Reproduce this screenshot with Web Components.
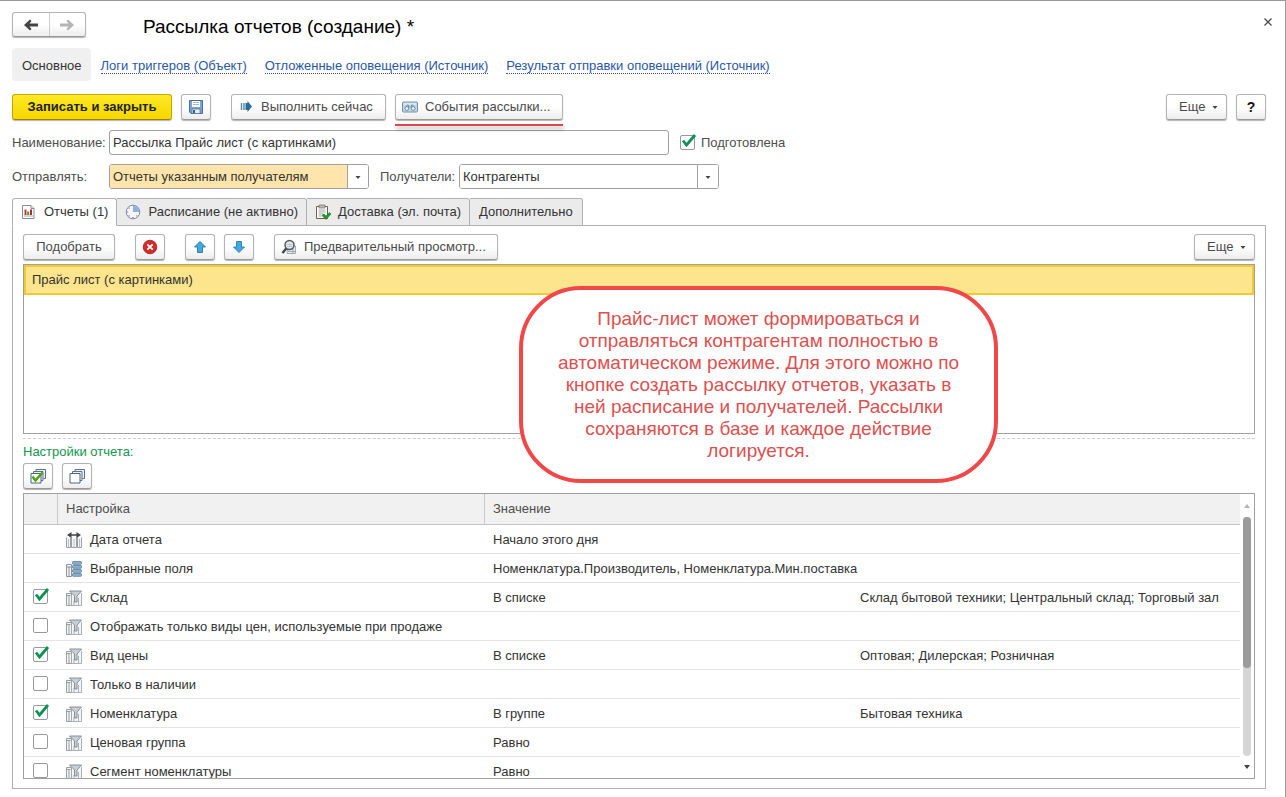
<!DOCTYPE html>
<html lang="ru">
<head>
<meta charset="utf-8">
<title>Рассылка отчетов (создание)</title>
<style>
    html, body {
        margin: 0;
        height: 100%;
    }

    body {
        font-family: "Liberation Sans", Arial, sans-serif;
        font-size: 13px;
        line-height: 16px;
        color: #333;
        background: #fff;
    }
</style>
</head>
<body>
<mailing-form></mailing-form>

<script>
const ICONS = {
    back: '<path d="M1 8l6-5.500 1.500 1.500-2 2.500H15v3H6.500l2 2.500L7 13.500z" fill="#444"/>',
    forward: '<path d="M15 8L9 2.500 7.500 4l2 2.500H1v3h8.500l-2 2.500L9 13.500z" fill="#b5b5b5"/>',
    save: '<path d="M1.500 1.500h13v13H3L1.500 13z" fill="#7ba4d0" stroke="#4a6b92"/><path d="M4 2h8v6H4z" fill="#fff"/><path d="M5 3.500h6M5 5.500h6" stroke="#a9bccd"/><path d="M4 10h8v4.500H4z" fill="#e6edf3" stroke="#4a6b92" stroke-width=".7"/><path d="M5 11h2v3H5z" fill="#3e5d7a"/>',
    run: '<path d="M3.500 4v7M6 4v7" stroke="#4d88ad" stroke-width="1.400"/><path d="M7.500 4h2V2l4.500 5.500L9.500 13v-2h-2z" fill="#2b6c99"/>',
    events: '<rect x=".5" y="3" width="15" height="10" rx="1" fill="#c3d9e8" stroke="#7291a8"/><path d="M2 5h12" stroke="#eef5f9"/><path d="M3.500 9l1.500-3h1.500v2h3V6H11l1.500 3" stroke="#6f8fa7" fill="none" stroke-width=".9"/><circle cx="4.800" cy="9.500" r="1.900" fill="#eef5f9" stroke="#5d7d96" stroke-width=".9"/><circle cx="11.200" cy="9.500" r="1.900" fill="#eef5f9" stroke="#5d7d96" stroke-width=".9"/>',
    report: '<path d="M1.500 1.500h8.500l3 3v10h-11.500z" fill="#fff" stroke="#8c8c8c"/><path d="M10 1.500v3h3" fill="#e4e4e4" stroke="#8c8c8c"/><path d="M3.500 5.500h2V11h-2z" fill="#c93434"/><path d="M6.200 7.500h2V11h-2z" fill="#3c9a44"/><path d="M9 5.500h2V11H9z" fill="#b3272d"/><path d="M3 12h9" stroke="#aaa"/>',
    clock: '<circle cx="8" cy="8" r="6.800" fill="#f4f7fc" stroke="#7089b5"/><path d="M8 8V1.800A6.200 6.200 0 0 1 14.200 8z" fill="#8fb0df"/><path d="M8 13v1M2 8h1.200M3.800 12.200l.7-.7M12.200 12.200l-.7-.7M3.800 3.800l.7.7" stroke="#d9534a" stroke-width="1.200"/>',
    delivery: '<path d="M1.500 2.500h11v12h-11z" fill="#fff" stroke="#7a5a48"/><path d="M4 1h6v3H4z" fill="#b9b9b9" stroke="#6e6e6e" stroke-width=".7"/><path d="M3.500 6h7M3.500 8h7M3.500 10h5M3.500 12h3" stroke="#a3a3a3"/><path d="M7 11.500L9 10l2 2 3.500-3.500L16 10l-5 5.500z" fill="#1f9a2e" stroke="#0f7a1e" stroke-width=".6"/>',
    remove: '<circle cx="8" cy="8" r="6.800" fill="#d42a2a" stroke="#a51d1d" stroke-width=".8"/><path d="M5.300 5.300l5.400 5.400M10.700 5.300l-5.400 5.400" stroke="#fff" stroke-width="1.800"/>',
    up: '<path d="M8 2.500l5.500 5.500H10.500v5.500h-5V8H2.500z" fill="#41a8e0" stroke="#2878ab" stroke-width=".9"/>',
    down: '<path d="M8 13.500L2.500 8h3V2.500h5V8h3z" fill="#41a8e0" stroke="#2878ab" stroke-width=".9"/>',
    preview: '<path d="M7 7h7.500v7.500H6z" fill="#e8edf1" stroke="#8798a6" stroke-width=".8"/><path d="M7 12.500h7M12 9v5" stroke="#8798a6" stroke-width=".8"/><circle cx="8.500" cy="6" r="4.500" fill="#dfe7ec" stroke="#555" stroke-width="1.500"/><path d="M6 5.500h5M6 7.500h5" stroke="#a9b6bf" stroke-width=".8"/><path d="M5.200 9.500L1.500 14" stroke="#444" stroke-width="2.400"/>',
    checkAll: '<path d="M6 3.500v-2h9.500v9h-2" fill="#eef3f7" stroke="#5a7186"/><path d="M3.500 5.500v-2h9.500v9h-2" fill="#eef3f7" stroke="#5a7186"/><path d="M1 5.500h10v9.500H1z" fill="#fff" stroke="#4c6579"/><path d="M2.500 8.500l3 4 7-8" fill="none" stroke="#4fa51c" stroke-width="2.600"/>',
    uncheckAll: '<path d="M6 3.500v-2h9.500v9h-2" fill="#eef3f7" stroke="#5a7186"/><path d="M3.500 5.500v-2h9.500v9h-2" fill="#eef3f7" stroke="#5a7186"/><path d="M1 5.500h10v9.500H1z" fill="#fff" stroke="#4c6579"/>',
    period: '<path d="M.5 5.500v10h4v-10M5.500 5.500v10h5v-10M11.500 5.500v10h4v-10" fill="#f5f5f5" stroke="#8e9499" stroke-width=".9"/><path d="M2.500 7v8M8 7v8M13.500 7v8" stroke="#b9bec2"/><path d="M3 3h10" stroke="#333" stroke-width="1.400"/><path d="M1 3l4.500-3v6zM15 3l-4.500-3v6z" fill="#444"/>',
    fields: '<path d="M.5 3.500h5v12h-5zM.5 6h5M3 6v9" fill="#f5f5f5" stroke="#8e9499"/><g fill="#8db2cc" stroke="#426d8c" stroke-width=".7"><rect x="6.500" y=".5" width="9" height="2.800" rx=".8"/><rect x="6.500" y="4.500" width="9" height="2.800" rx=".8"/><rect x="6.500" y="8.500" width="9" height="2.800" rx=".8"/><rect x="6.500" y="12.500" width="9" height="2.800" rx=".8"/></g>',
    filter: '<path d="M.5 3.500h5v12h-5zM.5 5.500h4M3 6v9" fill="#f3f4f5" stroke="#8e9499" stroke-width=".9"/><path d="M5.500 6v9.500h10V3M8 15v-4M12.500 15V8" fill="#f3f4f5" stroke="#a2a8ad" stroke-width=".9"/><path d="M3.500 1h12L11 6v6H8.500V6z" fill="#c8d0d6" stroke="#7b868f" stroke-width=".9"/>',
    close: '<path d="M4.500 4.500l7 7M11.500 4.500l-7 7" stroke="#444" stroke-width="1.200"/>',
    caret: '<path d="M5.500 7h5L8 10z" fill="#444"/>',
    scrollUp: '<path d="M5 10h6L8 6z" fill="#b5b5b5"/>',
    scrollDown: '<path d="M5 6h6l-3 4z" fill="#444"/>'
};

class UiIcon extends HTMLElement {
    connectedCallback() {
        this.attachShadow({ mode: 'open' });
        this.shadowRoot.innerHTML = `
            <style>
                :host { display: block; flex: none; width: 16px; height: 16px; }
                svg { display: block; }
            </style>
            <svg width="16" height="16" viewBox="0 0 16 16" aria-hidden="true">${ICONS[this.getAttribute('name')]}</svg>
        `;
    }
}

class UiButton extends HTMLElement {
    connectedCallback() {
        const icon = this.getAttribute('icon');
        const label = this.getAttribute('label');
        this.attachShadow({ mode: 'open' });
        this.shadowRoot.innerHTML = `
            <style>
                :host { display: block; position: relative; flex: none; }

                button {
                    display: flex;
                    align-items: center;
                    justify-content: center;
                    gap: 7px;
                    box-sizing: border-box;
                    width: 100%;
                    height: 26px;
                    margin: 0;
                    padding: 0 6px;
                    border: 1px solid #b3b3b3;
                    border-bottom-color: #999;
                    border-radius: 3px;
                    background: linear-gradient(#fff 50%, #ededed);
                    box-shadow: 0 1px 1px rgba(0, 0, 0, 0.3);
                    font: inherit;
                    color: #4a4a4a;
                    white-space: nowrap;
                    cursor: pointer;
                }

                :host([icon]) button { justify-content: flex-start; }
                :host([square]) { width: 30px; }
                :host([square]) button { justify-content: center; padding: 0; }

                :host([primary]) button {
                    border-color: #c6a800;
                    border-bottom-color: #9c8500;
                    background: linear-gradient(#ffe924, #f5d800);
                    color: #222;
                    font-weight: bold;
                }

                :host([menu]) button { justify-content: flex-start; gap: 2px; padding: 0 0 0 12px; }
                :host([strong]) button { color: #111; font-size: 14px; font-weight: bold; }

                /* red marker under the button */
                :host([marked])::after {
                    content: '';
                    position: absolute;
                    left: 0;
                    right: 0;
                    top: 30px;
                    height: 2px;
                    background: #e04848;
                    box-shadow: 1px 3px 4px rgba(0, 0, 0, 0.35);
                }
            </style>
            <button type="button" ${label ? `aria-label="${label}"` : ''}>
                ${icon ? `<ui-icon name="${icon}"></ui-icon>` : ''}
                <slot></slot>
                ${this.hasAttribute('menu') ? '<ui-icon name="caret"></ui-icon>' : ''}
            </button>
        `;
        if (icon && !this.textContent.trim()) {
            this.shadowRoot.querySelector('slot').remove();
        }
    }
}

class HistoryButtons extends HTMLElement {
    connectedCallback() {
        this.attachShadow({ mode: 'open' });
        this.shadowRoot.innerHTML = `
            <style>
                :host {
                    display: flex;
                    box-sizing: border-box;
                    width: 74px;
                    height: 25px;
                    border: 1px solid #b3b3b3;
                    border-bottom-color: #999;
                    border-radius: 3px;
                    background: linear-gradient(#fff 50%, #ededed);
                    box-shadow: 0 1px 1px rgba(0, 0, 0, 0.3);
                }

                button {
                    display: flex;
                    flex: 1;
                    align-items: center;
                    justify-content: center;
                    padding: 0;
                    border: 0;
                    background: none;
                }

                button + button { border-left: 1px solid #ccc; }
            </style>
            <button type="button" aria-label="Назад"><ui-icon name="back"></ui-icon></button>
            <button type="button" aria-label="Вперед"><ui-icon name="forward"></ui-icon></button>
        `;
    }
}

class SectionNav extends HTMLElement {
    connectedCallback() {
        this.attachShadow({ mode: 'open' });
        this.shadowRoot.innerHTML = `
            <style>
                nav { display: flex; align-items: center; gap: 18px; height: 33px; }

                span {
                    padding: 10px 9px 7px 10px;
                    margin-right: -8px;
                    border-radius: 4px;
                    background: #f0f0f0;
                    color: #333;
                }

                a {
                    padding-top: 4px;
                    border-bottom: 1px dotted #2b5797;
                    line-height: 14px;
                    color: #2a57a5;
                    text-decoration: none;
                }
            </style>
            <nav>
                <span>Основное</span>
                <a href="#triggers">Логи триггеров (Объект)</a>
                <a href="#delayed">Отложенные оповещения (Источник)</a>
                <a href="#result">Результат отправки оповещений (Источник)</a>
            </nav>
        `;
    }
}

class TextField extends HTMLElement {
    connectedCallback() {
        this.attachShadow({ mode: 'open' });
        this.shadowRoot.innerHTML = `
            <style>
                :host { display: flex; align-items: center; }
                label { width: 97px; color: #4d4d4d; }

                input {
                    flex: 1;
                    box-sizing: border-box;
                    min-width: 0;
                    height: 25px;
                    padding: 0 3px;
                    border: 1px solid #a0a0a0;
                    border-radius: 3px;
                    font: inherit;
                    color: #333;
                }
            </style>
            <label for="field">${this.getAttribute('label')}</label>
            <input id="field" type="text" value="${this.getAttribute('value')}">
        `;
    }
}

class ComboField extends HTMLElement {
    connectedCallback() {
        this.attachShadow({ mode: 'open' });
        this.shadowRoot.innerHTML = `
            <style>
                :host { display: flex; align-items: center; }
                label { width: var(--label-width, 97px); color: #4d4d4d; }

                .box {
                    display: grid;
                    grid-template-columns: 1fr 21px;
                    flex: 1;
                    box-sizing: border-box;
                    height: 25px;
                    border: 1px solid #a0a0a0;
                    border-radius: 3px;
                    overflow: hidden;
                }

                select {
                    grid-area: 1 / 1 / 2 / 3;
                    appearance: none;
                    padding: 0 23px 0 3px;
                    border: 0;
                    background: var(--field-color, #fff);
                    font: inherit;
                    color: #333;
                }

                .arrow {
                    grid-area: 1 / 2;
                    display: grid;
                    place-items: center;
                    border-left: 1px solid #a0a0a0;
                    background: #fff;
                    pointer-events: none;
                }
            </style>
            <label for="field">${this.getAttribute('label')}</label>
            <div class="box">
                <select id="field"><option>${this.getAttribute('value')}</option></select>
                <span class="arrow"><ui-icon name="caret"></ui-icon></span>
            </div>
        `;
    }
}

class CheckField extends HTMLElement {
    connectedCallback() {
        const label = this.getAttribute('label');
        const visible = !this.hasAttribute('label-hidden');
        this.attachShadow({ mode: 'open' });
        this.shadowRoot.innerHTML = `
            <style>
                :host { display: block; color: #4d4d4d; }
                label { display: flex; align-items: center; gap: 6px; }

                input {
                    appearance: none;
                    flex: none;
                    box-sizing: border-box;
                    width: 15px;
                    height: 15px;
                    margin: 0;
                    border: 1px solid #999;
                    border-radius: 2px;
                    background: #fff;
                }

                .mark { display: grid; }
                .mark > * { grid-area: 1 / 1; }
                svg { display: none; z-index: 1; overflow: visible; pointer-events: none; }
                input:checked + svg { display: block; }
            </style>
            <label>
                <span class="mark">
                    <input type="checkbox" ${visible ? '' : `aria-label="${label}"`} ${this.hasAttribute('checked') ? 'checked' : ''}>
                    <svg width="15" height="15" viewBox="0 0 15 15"><path d="M3 5.500L6.500 10 15 0" fill="none" stroke="#0d9254" stroke-width="2.800"/></svg>
                </span>
                ${visible ? label : ''}
            </label>
        `;
    }
}

class TabBar extends HTMLElement {
    connectedCallback() {
        const tabs = [
            ['report', 'Отчеты (1)'],
            ['clock', 'Расписание (не активно)'],
            ['delivery', 'Доставка (эл. почта)'],
            ['', 'Дополнительно']
        ];
        this.attachShadow({ mode: 'open' });
        this.shadowRoot.innerHTML = `
            <style>
                :host { display: flex; height: 28px; margin-bottom: -1px; position: relative; }

                button {
                    display: flex;
                    align-items: center;
                    gap: 7px;
                    padding: 0 8px;
                    border: 1px solid #b0b0b0;
                    border-left-width: 0;
                    border-radius: 0 3px 0 0;
                    background: #ebebeb;
                    font: inherit;
                    color: #333;
                }

                button:last-child { padding: 0 9px; }

                button.active {
                    border-left-width: 1px;
                    border-bottom-color: #fff;
                    border-radius: 3px 3px 0 0;
                    background: #fff;
                }
            </style>
            ${tabs.map(([icon, text], i) => `
                <button type="button" role="tab" class="${i ? '' : 'active'}">${icon ? `<ui-icon name="${icon}"></ui-icon>` : ''}${text}</button>
            `).join('')}
        `;
        this.setAttribute('role', 'tablist');
    }
}

class ReportList extends HTMLElement {
    connectedCallback() {
        this.attachShadow({ mode: 'open' });
        this.shadowRoot.innerHTML = `
            <style>
                :host {
                    display: block;
                    box-sizing: border-box;
                    height: 170px;
                    border: 1px solid #a0a0a0;
                }

                .row {
                    padding: 4px 6px;
                    border: 2px solid #f4c92f;
                    background: #fce58c;
                    line-height: 18px;
                }
            </style>
            <div class="row"><slot></slot></div>
        `;
    }
}

class SettingsTable extends HTMLElement {
    connectedCallback() {
        // state: null - no checkbox
        const rows = [
            [null, 'period', 'Дата отчета', 'Начало этого дня', ''],
            [null, 'fields', 'Выбранные поля', 'Номенклатура.Производитель, Номенклатура.Мин.поставка', ''],
            [true, 'filter', 'Склад', 'В списке', 'Склад бытовой техники; Центральный склад; Торговый зал'],
            [false, 'filter', 'Отображать только виды цен, используемые при продаже', '', ''],
            [true, 'filter', 'Вид цены', 'В списке', 'Оптовая; Дилерская; Розничная'],
            [false, 'filter', 'Только в наличии', '', ''],
            [true, 'filter', 'Номенклатура', 'В группе', 'Бытовая техника'],
            [false, 'filter', 'Ценовая группа', 'Равно', ''],
            [false, 'filter', 'Сегмент номенклатуры', 'Равно', '']
        ];
        this.attachShadow({ mode: 'open' });
        this.shadowRoot.innerHTML = `
            <style>
                :host {
                    display: flex;
                    flex: 1 1 0;
                    min-height: 0;
                    border: 1px solid #a0a0a0;
                    overflow: hidden;
                }

                .view { flex: 1; overflow: hidden; }
                table { width: 100%; table-layout: fixed; border-collapse: separate; border-spacing: 0; }
                .flag { width: 34px; }
                .name { width: 427px; }
                .value { width: 367px; }

                th {
                    box-sizing: border-box;
                    height: 31px;
                    padding: 0 8px;
                    border-bottom: 1px solid #c4c4c4;
                    background: #f1f1f1;
                    font-weight: normal;
                    text-align: left;
                    color: #4d4d4d;
                }

                th:first-child, th:nth-child(2) { border-right: 1px solid #c9c9c9; }

                td {
                    box-sizing: border-box;
                    height: 29px;
                    padding: 2px 8px 0;
                    border-bottom: 1px solid #e3e3e3;
                    white-space: nowrap;
                }

                td:first-child { padding: 0 9px 2px; }
                .setting { display: flex; align-items: center; gap: 8px; }

                .scroll {
                    display: flex;
                    flex-direction: column;
                    align-items: center;
                    width: 14px;
                    padding: 4px 0 3px;
                }

                .track { flex: 1; width: 8px; margin: 3px 0; border-radius: 4px; background: #d5d5d5; }
                .thumb { height: 63%; border-radius: 4px; background: #9b9b9b; }
            </style>
            <div class="view">
                <table>
                    <colgroup><col class="flag"><col class="name"><col class="value"><col></colgroup>
                    <thead><tr><th></th><th>Настройка</th><th colspan="2">Значение</th></tr></thead>
                    <tbody>
                        ${rows.map(([state, icon, name, value, extra]) => `
                            <tr>
                                <td>${state === null ? '' : `<check-field label="${name}" label-hidden ${state ? 'checked' : ''}></check-field>`}</td>
                                <td><div class="setting"><ui-icon name="${icon}"></ui-icon>${name}</div></td>
                                <td>${value}</td>
                                <td>${extra}</td>
                            </tr>
                        `).join('')}
                    </tbody>
                </table>
            </div>
            <div class="scroll">
                <ui-icon name="scrollUp"></ui-icon>
                <div class="track"><div class="thumb"></div></div>
                <ui-icon name="scrollDown"></ui-icon>
            </div>
        `;
    }
}

class NoteCallout extends HTMLElement {
    connectedCallback() {
        this.attachShadow({ mode: 'open' });
        this.shadowRoot.innerHTML = `
            <style>
                :host {
                    display: block;
                    box-sizing: border-box;
                    width: 479px;
                    padding: 18px 28px 17px;
                    border: 4px solid #f04848;
                    border-radius: 62px;
                    background: #fff;
                    font-size: 19px;
                    line-height: 22px;
                    text-align: center;
                    color: #dd5050;
                }
            </style>
            <slot></slot>
        `;
    }
}

class MailingForm extends HTMLElement {
    connectedCallback() {
        this.attachShadow({ mode: 'open' });
        this.shadowRoot.innerHTML = `
            <style>
                :host {
                    display: flex;
                    flex-direction: column;
                    position: relative;
                    box-sizing: border-box;
                    height: 100vh;
                    padding: 11px 19px 8px 12px;
                    border-top: 1px solid #999;
                    border-right: 1px solid #999;
                }

                header { display: flex; align-items: flex-start; height: 26px; }
                h1 { flex: 1; margin: 0 0 0 57px; font-size: 19px; font-weight: normal; line-height: 30px; color: #000; }

                .close {
                    padding: 0;
                    margin: 2px -10px 0 0;
                    border: 0;
                    background: none;
                }

                section-nav { margin-top: 10px; }
                .bar { display: flex; align-items: center; }
                .grow { flex: 1; }
                .commands { gap: 9px; margin-top: 13px; }
                .run { margin-left: 11px; }
                .fields { gap: 11px; margin-top: 9px; }
                .fields.first { margin-top: 10px; }
                text-field { width: 657px; }
                .send { width: 357px; --field-color: #ffe5ab; }
                .to { width: 339px; --label-width: 79px; }
                tab-bar { margin-top: 9px; }

                .panel {
                    display: flex;
                    flex: 1 1 0;
                    flex-direction: column;
                    min-height: 0;
                    padding: 8px 10px 9px;
                    border: 1px solid #b0b0b0;
                }

                .tools { gap: 9px; margin-bottom: 4px; }
                .pick { width: 92px; }
                .gap { margin-left: 11px; }
                .more { width: 61px; }
                hr { width: 100%; margin: 4px 0 5px; border: 0; border-top: 1px dashed #ccc; }
                h2 { margin: 0; font-size: 13px; font-weight: normal; line-height: 16px; color: #11964f; }
                .marks { gap: 9px; margin: 3px 0 4px; }

                note-callout { position: absolute; top: 285px; left: 519px; }
            </style>
            <header>
                <history-buttons></history-buttons>
                <h1>Рассылка отчетов (создание) *</h1>
                <button class="close" type="button" aria-label="Закрыть"><ui-icon name="close"></ui-icon></button>
            </header>
            <section-nav></section-nav>
            <div class="bar commands">
                <ui-button primary style="width: 160px">Записать и закрыть</ui-button>
                <ui-button square icon="save" label="Записать"></ui-button>
                <ui-button class="run" icon="run" style="width: 155px">Выполнить сейчас</ui-button>
                <ui-button icon="events" marked style="width: 168px">События рассылки...</ui-button>
                <span class="grow"></span>
                <ui-button class="more" menu>Еще</ui-button>
                <ui-button square strong>?</ui-button>
            </div>
            <div class="bar fields first">
                <text-field label="Наименование:" value="Рассылка Прайс лист (с картинками)"></text-field>
                <check-field label="Подготовлена" checked></check-field>
            </div>
            <div class="bar fields">
                <combo-field class="send" label="Отправлять:" value="Отчеты указанным получателям"></combo-field>
                <combo-field class="to" label="Получатели:" value="Контрагенты"></combo-field>
            </div>
            <tab-bar></tab-bar>
            <div class="panel">
                <div class="bar tools">
                    <ui-button class="pick">Подобрать</ui-button>
                    <ui-button class="gap" square icon="remove" label="Удалить"></ui-button>
                    <ui-button class="gap" square icon="up" label="Вверх"></ui-button>
                    <ui-button square icon="down" label="Вниз"></ui-button>
                    <ui-button class="gap" icon="preview" style="width: 224px">Предварительный просмотр...</ui-button>
                    <span class="grow"></span>
                    <ui-button class="more" menu>Еще</ui-button>
                </div>
                <report-list>Прайс лист (с картинками)</report-list>
                <hr>
                <h2>Настройки отчета:</h2>
                <div class="bar marks">
                    <ui-button square icon="checkAll" label="Включить все"></ui-button>
                    <ui-button square icon="uncheckAll" label="Выключить все"></ui-button>
                </div>
                <settings-table></settings-table>
            </div>
            <note-callout>Прайс-лист может формироваться и отправляться контрагентам полностью в автоматическом режиме. Для этого можно по кнопке создать рассылку отчетов, указать в ней расписание и получателей. Рассылки сохраняются в базе и каждое действие логируется.</note-callout>
        `;
    }
}

customElements.define('ui-icon', UiIcon);
customElements.define('ui-button', UiButton);
customElements.define('history-buttons', HistoryButtons);
customElements.define('section-nav', SectionNav);
customElements.define('text-field', TextField);
customElements.define('combo-field', ComboField);
customElements.define('check-field', CheckField);
customElements.define('tab-bar', TabBar);
customElements.define('report-list', ReportList);
customElements.define('settings-table', SettingsTable);
customElements.define('note-callout', NoteCallout);
customElements.define('mailing-form', MailingForm);
</script>
</body>
</html>
